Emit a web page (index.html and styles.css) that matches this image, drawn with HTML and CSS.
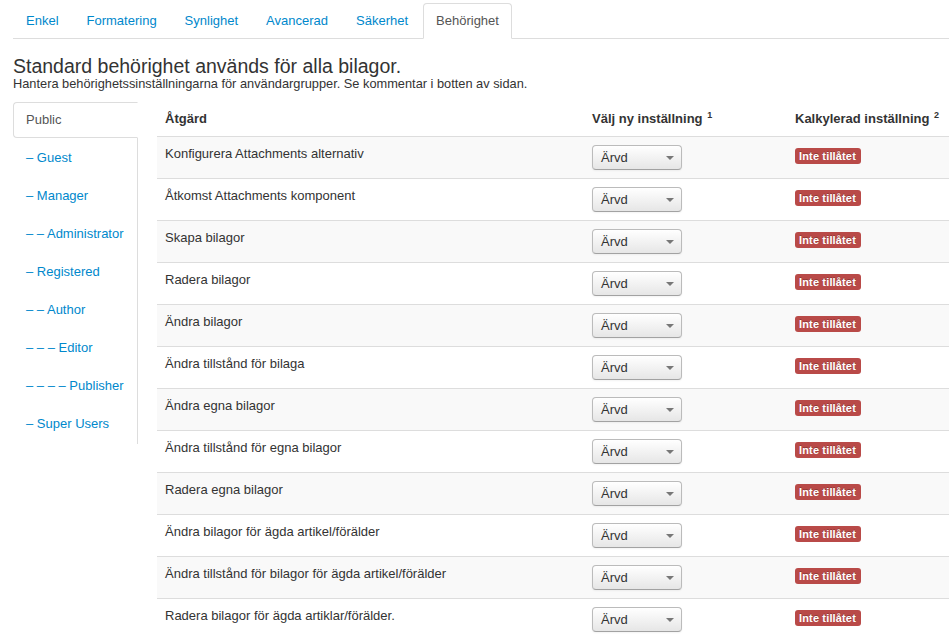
FILE: index.html
```html
<!DOCTYPE html>
<html lang="sv">
<head>
<meta charset="utf-8">
<title>Behörighet</title>
<link rel="stylesheet" href="styles.css">
</head>
<body>
<div class="page">
  <ul class="tabs">
    <li><a href="#">Enkel</a></li>
    <li><a href="#">Formatering</a></li>
    <li><a href="#">Synlighet</a></li>
    <li><a href="#">Avancerad</a></li>
    <li><a href="#">Säkerhet</a></li>
    <li class="active"><a href="#">Behörighet</a></li>
  </ul>
  <h3 class="title">Standard behörighet används för alla bilagor.</h3>
  <p class="subtitle">Hantera behörighetssinställningarna för användargrupper. Se kommentar i botten av sidan.</p>
  <div class="perm">
    <ul class="groups">
      <li class="active"><a href="#">Public</a></li>
      <li><a href="#">– Guest</a></li>
      <li><a href="#">– Manager</a></li>
      <li><a href="#">– – Administrator</a></li>
      <li><a href="#">– Registered</a></li>
      <li><a href="#">– – Author</a></li>
      <li><a href="#">– – – Editor</a></li>
      <li><a href="#">– – – – Publisher</a></li>
      <li><a href="#">– Super Users</a></li>
    </ul>
    <table class="rules">
      <colgroup><col class="c1"><col class="c2"><col class="c3"></colgroup>
      <thead>
        <tr><th>Åtgärd</th><th>Välj ny inställning <sup>1</sup></th><th>Kalkylerad inställning <sup>2</sup></th></tr>
      </thead>
      <tbody>
        <tr><td>Konfigurera Attachments alternativ</td><td><span class="select">Ärvd<i class="caret"></i></span></td><td><span class="badge">Inte tillåtet</span></td></tr>
        <tr><td>Åtkomst Attachments komponent</td><td><span class="select">Ärvd<i class="caret"></i></span></td><td><span class="badge">Inte tillåtet</span></td></tr>
        <tr><td>Skapa bilagor</td><td><span class="select">Ärvd<i class="caret"></i></span></td><td><span class="badge">Inte tillåtet</span></td></tr>
        <tr><td>Radera bilagor</td><td><span class="select">Ärvd<i class="caret"></i></span></td><td><span class="badge">Inte tillåtet</span></td></tr>
        <tr><td>Ändra bilagor</td><td><span class="select">Ärvd<i class="caret"></i></span></td><td><span class="badge">Inte tillåtet</span></td></tr>
        <tr><td>Ändra tillstånd för bilaga</td><td><span class="select">Ärvd<i class="caret"></i></span></td><td><span class="badge">Inte tillåtet</span></td></tr>
        <tr><td>Ändra egna bilagor</td><td><span class="select">Ärvd<i class="caret"></i></span></td><td><span class="badge">Inte tillåtet</span></td></tr>
        <tr><td>Ändra tillstånd för egna bilagor</td><td><span class="select">Ärvd<i class="caret"></i></span></td><td><span class="badge">Inte tillåtet</span></td></tr>
        <tr><td>Radera egna bilagor</td><td><span class="select">Ärvd<i class="caret"></i></span></td><td><span class="badge">Inte tillåtet</span></td></tr>
        <tr><td>Ändra bilagor för ägda artikel/förälder</td><td><span class="select">Ärvd<i class="caret"></i></span></td><td><span class="badge">Inte tillåtet</span></td></tr>
        <tr><td>Ändra tillstånd för bilagor för ägda artikel/förälder</td><td><span class="select">Ärvd<i class="caret"></i></span></td><td><span class="badge">Inte tillåtet</span></td></tr>
        <tr><td>Radera bilagor för ägda artiklar/förälder.</td><td><span class="select">Ärvd<i class="caret"></i></span></td><td><span class="badge">Inte tillåtet</span></td></tr>
      </tbody>
    </table>
  </div>
</div>
</body>
</html>
```
FILE: styles.css
```css
html, body {
  margin: 0;
  padding: 0;
  background: #fff;
  overflow: hidden;
}
body {
  font-family: "Liberation Sans", Arial, sans-serif;
  font-size: 13px;
  line-height: 18px;
  color: #333;
}
a { color: #0088cc; text-decoration: none; }
.page {
  padding: 3px 0 0 13px;
}
.tabs {
  list-style: none;
  margin: 0;
  padding: 0;
  display: flex;
  border-bottom: 1px solid #ddd;
}
.tabs li { margin-bottom: -1px; }
.tabs a {
  display: block;
  padding: 8px 12px;
  line-height: 18px;
  margin-right: 2px;
  border: 1px solid transparent;
  border-radius: 4px 4px 0 0;
}
.tabs .active a {
  color: #555;
  background: #fff;
  border-color: #ddd #ddd transparent;
}
.title {
  margin: 17px 0 0;
  font-size: 19.5px;
  line-height: 20px;
  font-weight: normal;
  color: #333;
}
.subtitle {
  margin: 0;
  font-size: 12.8px;
  line-height: 16px;
}
.perm {
  display: flex;
  align-items: flex-start;
  margin-top: 10px;
  gap: 19px;
}
.groups {
  list-style: none;
  margin: 0;
  padding: 0;
  width: 124px;
  flex: none;
  border-right: 1px solid #ddd;
}
.groups li { margin-bottom: 2px; margin-right: -1px; }
.groups a {
  display: block;
  padding: 8px 12px;
  line-height: 18px;
  border: 1px solid transparent;
  border-radius: 4px 0 0 4px;
}
.groups .active a {
  color: #555;
  background: #fff;
  border-color: #ddd transparent #ddd #ddd;
}
.rules {
  flex: 1;
  border-collapse: collapse;
  border-spacing: 0;
  table-layout: fixed;
}
.rules .c1 { width: 427px; }
.rules .c2 { width: 203px; }
.rules th, .rules td {
  text-align: left;
  vertical-align: top;
  padding: 8px;
  line-height: 18px;
  white-space: nowrap;
}
.rules th { font-weight: bold; }
.rules td { border-top: 1px solid #ddd; }
.rules tbody tr:nth-child(odd) td { background: #f9f9f9; }
.rules sup {
  font-size: 9px;
  line-height: 0;
  vertical-align: 5px;
  margin-left: 1px;
}
.select {
  display: flex;
  align-items: center;
  justify-content: space-between;
  box-sizing: border-box;
  width: 90px;
  height: 25px;
  padding: 0 7px 0 8px;
  border: 1px solid #bbb;
  border-bottom-color: #a2a2a2;
  border-radius: 4px;
  background: linear-gradient(#ffffff, #e6e6e6);
  box-shadow: inset 0 1px 0 rgba(255,255,255,.2), 0 1px 2px rgba(0,0,0,.05);
  color: #333;
  font-size: 13px;
}
.caret {
  width: 0;
  height: 0;
  border-left: 4px solid transparent;
  border-right: 4px solid transparent;
  border-top: 4px solid #777;
}
.badge {
  display: inline-block;
  margin-top: 3px;
  padding: 2px 5px 2px 4px;
  font-size: 11px;
  font-weight: bold;
  line-height: 12px;
  letter-spacing: 0.15px;
  color: #fff;
  background: #b94a48;
  border-radius: 3px;
  text-shadow: 0 -1px 0 rgba(0,0,0,.25);
}
```
